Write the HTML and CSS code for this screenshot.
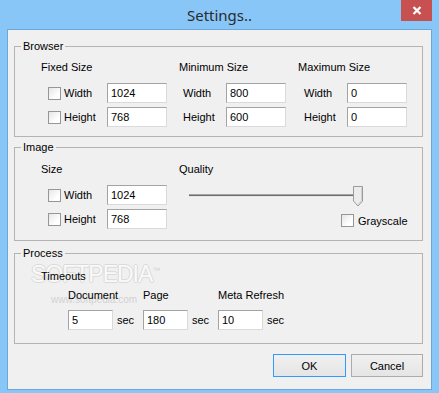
FILE: index.html
```html
<!DOCTYPE html>
<html lang="en">

<head>
    <meta charset="utf8">
    <title>Settings..</title>
    <link rel="stylesheet" href="styles.css">
</head>

<body>
    <div class="window">
        <div class="titlebar">
            <div class="title">Settings..</div>
            <button class="close" aria-label="Close">
                <svg width="10" height="9" viewBox="0 0 10 9">
                    <path d="M1.5 1 L8.5 8 M8.5 1 L1.5 8" stroke="#fff" stroke-width="2.2" fill="none"/>
                </svg>
            </button>
        </div>

        <div class="client">
            <fieldset class="group browser">
                <legend>Browser</legend>
                <div class="cols">
                    <div class="col col-fixed">
                        <div class="head">Fixed Size</div>
                        <div class="row">
                            <input type="checkbox">
                            <span class="lbl">Width</span>
                            <input type="text" class="num" value="1024">
                        </div>
                        <div class="row">
                            <input type="checkbox">
                            <span class="lbl">Height</span>
                            <input type="text" class="num" value="768">
                        </div>
                    </div>
                    <div class="col col-min">
                        <div class="head">Minimum Size</div>
                        <div class="row">
                            <span class="lbl">Width</span>
                            <input type="text" class="num" value="800">
                        </div>
                        <div class="row">
                            <span class="lbl">Height</span>
                            <input type="text" class="num" value="600">
                        </div>
                    </div>
                    <div class="col col-max">
                        <div class="head">Maximum Size</div>
                        <div class="row">
                            <span class="lbl">Width</span>
                            <input type="text" class="num" value="0">
                        </div>
                        <div class="row">
                            <span class="lbl">Height</span>
                            <input type="text" class="num" value="0">
                        </div>
                    </div>
                </div>
            </fieldset>

            <fieldset class="group image">
                <legend>Image</legend>
                <div class="cols">
                    <div class="col col-fixed">
                        <div class="head">Size</div>
                        <div class="row">
                            <input type="checkbox">
                            <span class="lbl">Width</span>
                            <input type="text" class="num" value="1024">
                        </div>
                        <div class="row">
                            <input type="checkbox">
                            <span class="lbl">Height</span>
                            <input type="text" class="num" value="768">
                        </div>
                    </div>
                    <div class="col col-quality">
                        <div class="head">Quality</div>
                        <div class="slider">
                            <svg width="175" height="21" viewBox="0 0 175 21">
                                <rect x="0" y="8" width="168" height="1" fill="#a5a5a5"/>
                                <rect x="0" y="9" width="168" height="1" fill="#6d6d6d"/>
                                <rect x="0" y="10" width="168" height="1" fill="#e6e6e6"/>
                                <path d="M164.5 0.5 H173.5 V15 L169 20 L164.5 15 Z" fill="#ececec" stroke="#9a9a9a"/>
                                <path d="M172.5 1.5 V14.6 L169 18.5" fill="none" stroke="#cfcfcf"/>
                            </svg>
                        </div>
                        <div class="row gray">
                            <input type="checkbox">
                            <span>Grayscale</span>
                        </div>
                    </div>
                </div>
            </fieldset>

            <fieldset class="group process">
                <legend>Process</legend>
                <div class="watermark">
                    <span class="wm-big">SOFTPEDIA</span><span class="wm-tm">™</span>
                    <span class="wm-url">www.softpedia.com</span>
                </div>
                <div class="head timeouts">Timeouts</div>
                <div class="timers">
                    <div class="timer">
                        <div class="head">Document</div>
                        <div class="row">
                            <input type="text" class="sec" value="5">
                            <span>sec</span>
                        </div>
                    </div>
                    <div class="timer">
                        <div class="head">Page</div>
                        <div class="row">
                            <input type="text" class="sec" value="180">
                            <span>sec</span>
                        </div>
                    </div>
                    <div class="timer">
                        <div class="head">Meta Refresh</div>
                        <div class="row">
                            <input type="text" class="sec" value="10">
                            <span>sec</span>
                        </div>
                    </div>
                </div>
            </fieldset>

            <div class="buttons">
                <button class="btn default">OK</button>
                <button class="btn">Cancel</button>
            </div>
        </div>
    </div>
</body>

</html>
```

FILE: styles.css
```css
* {
    box-sizing: border-box;
}

body {
    margin: 0;
    font-family: "Liberation Sans", Arial, sans-serif;
    font-size: 11px;
    color: #000;
}

div.window {
    width: 439px;
    height: 393px;
    background-color: #89c6f8;
    display: flex;
    flex-direction: column;
}

div.titlebar {
    height: 29px;
    display: flex;
    padding-left: 38px;
    padding-right: 7px;
}

div.titlebar div.title {
    flex-grow: 1;
    text-align: center;
    font-family: "Noto Sans", "Open Sans", sans-serif;
    font-size: 15px;
    line-height: 30px;
    color: #2b2b2b;
}

div.titlebar button.close {
    width: 31px;
    height: 21px;
    border: 0 none;
    padding: 0;
    background-color: #c75050;
    display: flex;
    align-items: center;
    justify-content: center;
}

div.client {
    margin: 0 7px;
    height: 361px;
    border: 1px solid #6ea6d6;
    background-color: #f0f0f0;
    padding-top: 9px;
}

fieldset.group {
    margin: 0 8px 0 6px;
    padding: 10px 0 9px 26px;
    border: 1px solid #b4b4b4;
    min-width: 0;
    position: relative;
}

fieldset.group legend {
    margin-left: -20px;
    padding: 0 2px;
    line-height: 12px;
}

fieldset.browser {
    margin-top: 1px;
    padding-top: 9px;
}

fieldset.image {
    margin-top: 4px;
    padding-bottom: 11px;
}

fieldset.process {
    margin-top: 6px;
    padding-top: 11px;
    padding-bottom: 13px;
}

div.head {
    line-height: 13px;
    white-space: nowrap;
}

div.cols {
    display: flex;
}

div.col {
    display: flex;
    flex-direction: column;
}

div.col-fixed {
    width: 138px;
}

div.col-min {
    width: 119px;
}

div.col .row {
    display: flex;
    align-items: center;
    margin-top: 4px;
}

div.col .head + .row {
    margin-top: 9px;
}

div.col-fixed .row {
    padding-left: 7px;
}

div.col-min .row {
    padding-left: 4px;
}

div.col-max .row {
    padding-left: 6px;
}

div.image div.col-fixed .row {
    margin-top: 6px;
}

div.image div.col-fixed .head + .row {
    margin-top: 8px;
}

span.lbl {
    width: 43px;
}

div.col-fixed span.lbl {
    margin-left: 3px;
}

input[type="checkbox"] {
    appearance: none;
    margin: 0;
    width: 13px;
    height: 13px;
    border: 1px solid #969696;
    background: linear-gradient(135deg, #e6e6e6, #ffffff 70%);
}

input[type="text"] {
    font-family: "Liberation Sans", Arial, sans-serif;
    font-size: 11px;
    color: #000;
    height: 20px;
    margin: 0;
    padding: 0 3px;
    border: 1px solid;
    border-color: #a3a3a3 #dadada #dadada #a3a3a3;
    background-color: #fff;
}

input.num {
    width: 60px;
}

input.sec {
    width: 45px;
    margin-right: 4px;
}

div.col-quality div.slider {
    margin-top: 10px;
    padding-left: 10px;
    height: 21px;
}

div.col-quality div.slider svg {
    display: block;
}

div.col-quality .row.gray {
    margin-top: 7px;
    padding-left: 162px;
}

div.col-quality .row.gray span {
    margin-left: 4px;
}

div.timeouts {
    position: relative;
}

div.timers {
    display: flex;
    padding-left: 27px;
    margin-top: 6px;
    position: relative;
}

div.timer {
    width: 75px;
}

div.timer .row {
    display: flex;
    align-items: center;
    margin-top: 8px;
}

div.watermark {
    position: absolute;
    left: 16px;
    top: 2px;
    pointer-events: none;
}

span.wm-big {
    font-size: 23px;
    letter-spacing: -1px;
    color: #f9f9f9;
    text-shadow: 1px 0 #dadada, -1px 0 #dadada, 0 1px #dadada, 0 -1px #dadada;
}

span.wm-tm {
    position: relative;
    top: -9px;
    font-size: 8px;
    color: #d0d0d0;
}

span.wm-url {
    position: absolute;
    left: 20px;
    top: 33px;
    font-size: 10px;
    color: #d2d2d2;
    white-space: nowrap;
}

div.buttons {
    display: flex;
    justify-content: flex-end;
    column-gap: 5px;
    margin-top: 10px;
    padding-right: 8px;
}

button.btn {
    width: 72px;
    height: 23px;
    font-family: "Liberation Sans", Arial, sans-serif;
    font-size: 11px;
    color: #000;
    border: 1px solid #acacac;
    background: linear-gradient(#f0f0f0, #e5e5e5);
    padding: 0;
}

button.btn.default {
    width: 73px;
    border-color: #3399ff;
}
```
